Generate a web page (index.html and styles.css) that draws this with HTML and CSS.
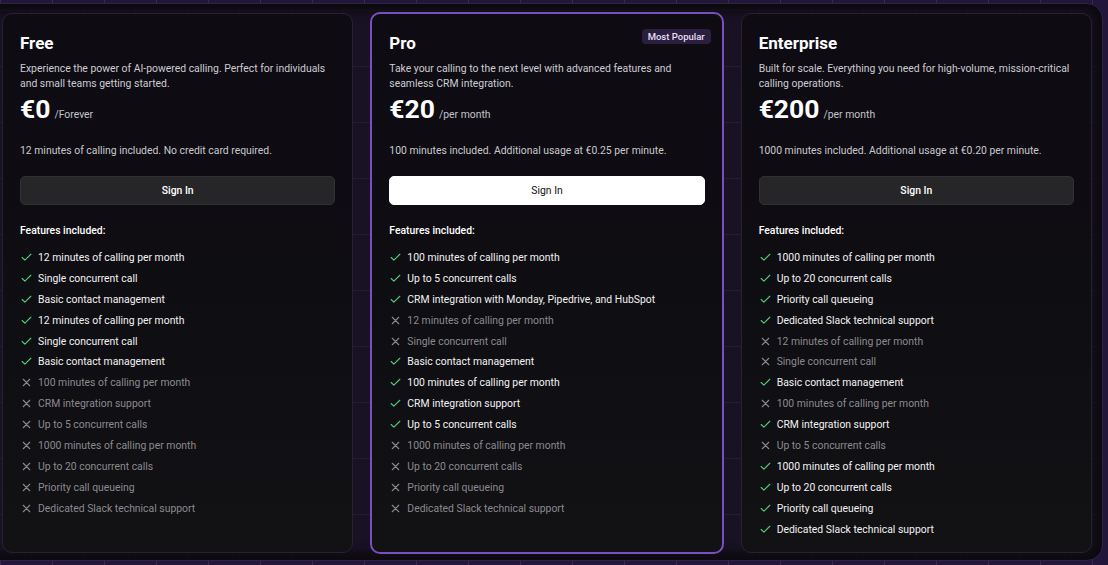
FILE: index.html
```html
<!DOCTYPE html>
<html>
<head>
    <title>Pricing</title>
    <link rel="stylesheet" href="styles.css">
</head>
<body>
    <svg width="0" height="0" class="defs">
        <symbol id="yes" viewBox="0 0 24 24"><path d="M20 6 9 17l-5-5" fill="none" stroke="currentColor" stroke-width="2" stroke-linecap="round" stroke-linejoin="round"/></symbol>
        <symbol id="no" viewBox="0 0 24 24"><path d="M18 6 6 18M6 6l12 12" fill="none" stroke="currentColor" stroke-width="2" stroke-linecap="round" stroke-linejoin="round"/></symbol>
    </svg>

    <div class="frame">
        <div class="plans">

            <div class="card">
                <h2>Free</h2>
                <p class="desc">Experience the power of AI-powered calling. Perfect for individuals and small teams getting started.</p>
                <div class="price"><span class="amount">€0</span><span class="period">/Forever</span></div>
                <p class="note">12 minutes of calling included. No credit card required.</p>
                <button class="btn">Sign In</button>
                <h3>Features included:</h3>
                <ul class="features">
                    <li><svg class="ic ok"><use href="#yes"/></svg>12 minutes of calling per month</li>
                    <li><svg class="ic ok"><use href="#yes"/></svg>Single concurrent call</li>
                    <li><svg class="ic ok"><use href="#yes"/></svg>Basic contact management</li>
                    <li><svg class="ic ok"><use href="#yes"/></svg>12 minutes of calling per month</li>
                    <li><svg class="ic ok"><use href="#yes"/></svg>Single concurrent call</li>
                    <li><svg class="ic ok"><use href="#yes"/></svg>Basic contact management</li>
                    <li class="off"><svg class="ic"><use href="#no"/></svg>100 minutes of calling per month</li>
                    <li class="off"><svg class="ic"><use href="#no"/></svg>CRM integration support</li>
                    <li class="off"><svg class="ic"><use href="#no"/></svg>Up to 5 concurrent calls</li>
                    <li class="off"><svg class="ic"><use href="#no"/></svg>1000 minutes of calling per month</li>
                    <li class="off"><svg class="ic"><use href="#no"/></svg>Up to 20 concurrent calls</li>
                    <li class="off"><svg class="ic"><use href="#no"/></svg>Priority call queueing</li>
                    <li class="off"><svg class="ic"><use href="#no"/></svg>Dedicated Slack technical support</li>
                </ul>
            </div>

            <div class="card popular">
                <span class="badge">Most Popular</span>
                <h2>Pro</h2>
                <p class="desc">Take your calling to the next level with advanced features and seamless CRM integration.</p>
                <div class="price"><span class="amount">€20</span><span class="period">/per month</span></div>
                <p class="note">100 minutes included. Additional usage at €0.25 per minute.</p>
                <button class="btn light">Sign In</button>
                <h3>Features included:</h3>
                <ul class="features">
                    <li><svg class="ic ok"><use href="#yes"/></svg>100 minutes of calling per month</li>
                    <li><svg class="ic ok"><use href="#yes"/></svg>Up to 5 concurrent calls</li>
                    <li><svg class="ic ok"><use href="#yes"/></svg>CRM integration with Monday, Pipedrive, and HubSpot</li>
                    <li class="off"><svg class="ic"><use href="#no"/></svg>12 minutes of calling per month</li>
                    <li class="off"><svg class="ic"><use href="#no"/></svg>Single concurrent call</li>
                    <li><svg class="ic ok"><use href="#yes"/></svg>Basic contact management</li>
                    <li><svg class="ic ok"><use href="#yes"/></svg>100 minutes of calling per month</li>
                    <li><svg class="ic ok"><use href="#yes"/></svg>CRM integration support</li>
                    <li><svg class="ic ok"><use href="#yes"/></svg>Up to 5 concurrent calls</li>
                    <li class="off"><svg class="ic"><use href="#no"/></svg>1000 minutes of calling per month</li>
                    <li class="off"><svg class="ic"><use href="#no"/></svg>Up to 20 concurrent calls</li>
                    <li class="off"><svg class="ic"><use href="#no"/></svg>Priority call queueing</li>
                    <li class="off"><svg class="ic"><use href="#no"/></svg>Dedicated Slack technical support</li>
                </ul>
            </div>

            <div class="card">
                <h2>Enterprise</h2>
                <p class="desc">Built for scale. Everything you need for high-volume, mission-critical calling operations.</p>
                <div class="price"><span class="amount">€200</span><span class="period">/per month</span></div>
                <p class="note">1000 minutes included. Additional usage at €0.20 per minute.</p>
                <button class="btn">Sign In</button>
                <h3>Features included:</h3>
                <ul class="features">
                    <li><svg class="ic ok"><use href="#yes"/></svg>1000 minutes of calling per month</li>
                    <li><svg class="ic ok"><use href="#yes"/></svg>Up to 20 concurrent calls</li>
                    <li><svg class="ic ok"><use href="#yes"/></svg>Priority call queueing</li>
                    <li><svg class="ic ok"><use href="#yes"/></svg>Dedicated Slack technical support</li>
                    <li class="off"><svg class="ic"><use href="#no"/></svg>12 minutes of calling per month</li>
                    <li class="off"><svg class="ic"><use href="#no"/></svg>Single concurrent call</li>
                    <li><svg class="ic ok"><use href="#yes"/></svg>Basic contact management</li>
                    <li class="off"><svg class="ic"><use href="#no"/></svg>100 minutes of calling per month</li>
                    <li><svg class="ic ok"><use href="#yes"/></svg>CRM integration support</li>
                    <li class="off"><svg class="ic"><use href="#no"/></svg>Up to 5 concurrent calls</li>
                    <li><svg class="ic ok"><use href="#yes"/></svg>1000 minutes of calling per month</li>
                    <li><svg class="ic ok"><use href="#yes"/></svg>Up to 20 concurrent calls</li>
                    <li><svg class="ic ok"><use href="#yes"/></svg>Priority call queueing</li>
                    <li><svg class="ic ok"><use href="#yes"/></svg>Dedicated Slack technical support</li>
                </ul>
            </div>

        </div>
    </div>
</body>
</html>
```

FILE: styles.css
```css
* {
    box-sizing: border-box;
    margin: 0px;
    padding: 0px;
}

body {
    height: 565px;
    overflow: hidden;
    background-color: #22163a;
    background-image:
        linear-gradient(90deg, rgba(160, 120, 220, 0.18) 1px, transparent 1px);
    background-size: 52px 56px;
    font-family: Roboto, "Liberation Sans", sans-serif;
    color: #fff;
}

.defs {
    position: absolute;
}

/* outer dark window, left edge runs off screen */
.frame {
    margin: 3px 5px 0px -22px;
    height: 558px;
    padding: 9px 10px 0px 23px;
    border: 1px solid #2d2342;
    border-radius: 16px;
    background-color: #191224;
    background-image:
        linear-gradient(rgba(150, 110, 210, 0.10) 1px, transparent 1px),
        linear-gradient(90deg, rgba(150, 110, 210, 0.08) 1px, transparent 1px);
    background-size: 52px 56px;
    background-position: 0px 6px;
    box-shadow: inset 0px 0px 10px 8px #0c0a0f;
}

.plans {
    display: grid;
    grid-template-columns: repeat(3, 1fr);
    column-gap: 18px;
    height: 540px;
}

.card {
    position: relative;
    padding: 18px 17px 0px 17px;
    border: 1px solid #282131;
    border-radius: 10px;
    background: linear-gradient(180deg, #0e0b13 0%, #0f0e12 60%, #121114 100%);
}

.card.popular {
    margin: -1px;
    border: 2px solid #7a4fbe;
}

.badge {
    position: absolute;
    top: 15px;
    right: 11px;
    height: 15px;
    padding: 0px 6px;
    border-radius: 4px;
    background: #2a1f3f;
    color: #e6def5;
    font-size: 9.5px;
    font-weight: 500;
    line-height: 15px;
}

h2 {
    font-size: 17px;
    font-weight: 700;
    line-height: 22px;
    margin-bottom: 7px;
}

.desc {
    font-size: 10.4px;
    line-height: 15px;
    color: #cdccd2;
}

.price {
    margin-top: 2px;
    line-height: 32px;
}

.amount {
    font-size: 26.5px;
    font-weight: 700;
}

.period {
    margin-left: 4px;
    font-size: 10.4px;
    color: #c4c3c8;
}

.note {
    margin-top: 12px;
    font-size: 10.4px;
    line-height: 15px;
    color: #c9c8cd;
}

.btn {
    display: block;
    width: 100%;
    height: 29px;
    margin-top: 18px;
    border: 1px solid #313034;
    border-radius: 5px;
    background: #262628;
    color: #fff;
    font-family: inherit;
    font-size: 10.4px;
    font-weight: 500;
}

.btn.light {
    border-color: #fff;
    background: #fff;
    color: #111;
    font-weight: 400;
}

h3 {
    margin-top: 18px;
    font-size: 10.4px;
    font-weight: 500;
    line-height: 15px;
}

.features {
    list-style: none;
    margin-top: 9px;
}

.features li {
    display: flex;
    align-items: center;
    gap: 5px;
    height: 20.9px;
    font-size: 10.4px;
    color: #f2f2f3;
}

.features li.off {
    color: #8b8a8f;
}

.ic {
    width: 13px;
    height: 13px;
    flex-shrink: 0;
    color: #8b8a8f;
}

.ic.ok {
    color: #4fcf78;
}
```
